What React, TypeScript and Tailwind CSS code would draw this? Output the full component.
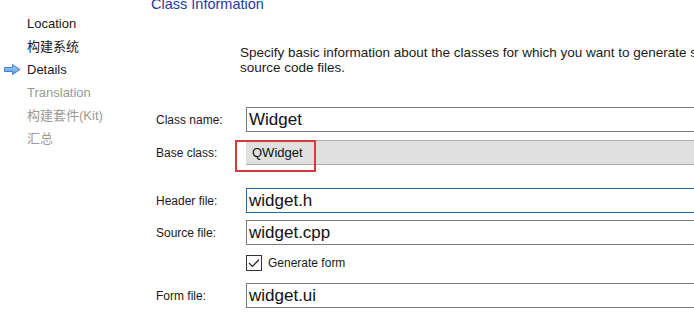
const steps = [
  { label: 'Location', state: 'done' },
  { label: '构建系统', state: 'done' },
  { label: 'Details', state: 'active' },
  { label: 'Translation', state: 'todo' },
  { label: '构建套件(Kit)', state: 'todo' },
  { label: '汇总', state: 'todo' },
]

function Arrow() {
  return (
    <svg width="17" height="11" viewBox="0 0 17 11" className="absolute left-[4px] top-[6px]">
      <defs>
        <linearGradient id="ag" x1="0" y1="0" x2="0" y2="1">
          <stop offset="0" stopColor="#a9cdf5" />
          <stop offset="1" stopColor="#5b9be0" />
        </linearGradient>
      </defs>
      <path d="M0.5 3.5 H8.5 V0.5 L16 5.5 L8.5 10.5 V7.5 H0.5 Z" fill="url(#ag)" stroke="#3f7fcf" strokeWidth="1" strokeLinejoin="round" />
    </svg>
  )
}

function Field({ label, value, variant = 'normal' }: { label: string; value: string; variant?: 'normal' | 'focus' | 'disabled' }) {
  const box =
    variant === 'focus'
      ? 'border border-[#2a6a9c] bg-white'
      : variant === 'disabled'
        ? 'border-y border-[#adadad] border-l-0 bg-[#e0e0e0]'
        : 'border border-[#7a7a7a] bg-white'
  return (
    <div className="flex items-center h-[25px]">
      <div className="w-[90px] shrink-0 text-[12px] text-[#1a1a1a]">{label}</div>
      <div className={`relative flex-1 h-[25px] flex items-center ${box}`}>
        {variant === 'disabled' ? (
          <>
            <span className="pl-[6px] text-[13px] text-[#111]">{value}</span>
            <div className="absolute left-[-11px] top-[-1px] w-[81px] h-[32px] border-2 border-[#d8393c]" />
          </>
        ) : (
          <span className="pl-[2px] text-[17px] text-[#111]">{value}</span>
        )}
      </div>
    </div>
  )
}

export default function App() {
  return (
    <div
      className="w-[694px] h-[317px] overflow-hidden bg-white flex"
      style={{ fontFamily: "'Liberation Sans', 'Noto Sans CJK SC', sans-serif" }}
    >
      <div className="w-[151px] shrink-0 pt-[12px]">
        {steps.map((s) => (
          <div key={s.label} className="relative h-[23px] leading-[23px] pl-[27px] text-[13px]">
            {s.state === 'active' && <Arrow />}
            <span className={s.state === 'todo' ? 'text-[#9a9a9a]' : 'text-[#1a1a1a]'}>{s.label}</span>
          </div>
        ))}
      </div>

      <div className="w-[620px] shrink-0">
        <div className="-mt-[3px] text-[14.5px] leading-[14px] text-[#1c3ca0] whitespace-nowrap">Class Information</div>

        <p className="mt-[34px] ml-[89px] text-[13.5px] leading-[15px] text-[#1a1a1a] whitespace-nowrap">
          Specify basic information about the classes for which you want to generate skeleton
          <br />
          source code files.
        </p>

        <div className="mt-[32px] pl-[5px] flex flex-col">
          <Field label="Class name:" value="Widget" />
          <div className="mt-[8px]">
            <Field label="Base class:" value="QWidget" variant="disabled" />
          </div>
          <div className="mt-[23px]">
            <Field label="Header file:" value="widget.h" variant="focus" />
          </div>
          <div className="mt-[7px]">
            <Field label="Source file:" value="widget.cpp" />
          </div>
          <div className="mt-[10px] ml-[90px] flex items-center h-[16px]">
            <div className="w-[16px] h-[16px] border border-[#333] bg-white flex items-center justify-center">
              <svg width="12" height="10" viewBox="0 0 12 10">
                <path d="M1 5 L4.5 8.5 L11 1.5" fill="none" stroke="#222" strokeWidth="1.2" />
              </svg>
            </div>
            <span className="ml-[6px] text-[12px] text-[#1a1a1a]">Generate form</span>
          </div>
          <div className="mt-[12px]">
            <Field label="Form file:" value="widget.ui" />
          </div>
        </div>
      </div>
    </div>
  )
}
